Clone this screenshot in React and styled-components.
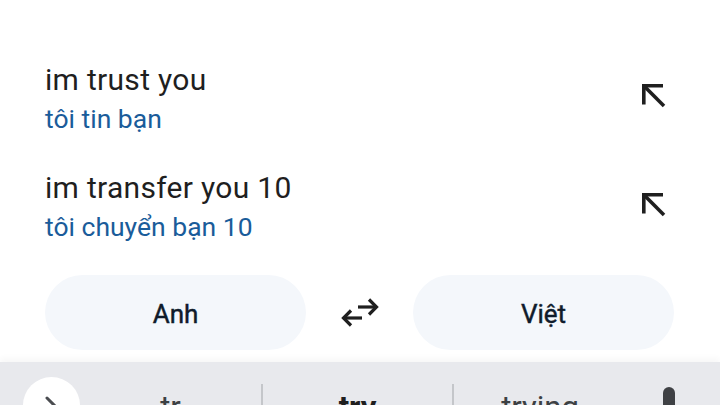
import React from "react";
import styled, { createGlobalStyle } from "styled-components";

const Global = createGlobalStyle`
  html, body { margin: 0; padding: 0; background: #ffffff; }
  body { font-family: Roboto, "Noto Sans", "Liberation Sans", sans-serif; }
`;

const Screen = styled.div`
  width: 720px;
  height: 405px;
  overflow: hidden;
  display: flex;
  flex-direction: column;
  background: #ffffff;
`;

const List = styled.div`
  display: flex;
  flex-direction: column;
  padding-top: 44px;
`;

const Row = styled.div`
  display: flex;
  align-items: flex-start;
  justify-content: space-between;
  padding: 18px 50px 17px 45px;
`;

const Texts = styled.div`
  display: flex;
  flex-direction: column;
  gap: 5px;
`;

const Source = styled.div`
  font-size: 30px;
  line-height: 36px;
  letter-spacing: 0.3px;
  color: #1f1f1f;
`;

const Target = styled.div`
  font-size: 26.5px;
  line-height: 32px;
  color: #1a5c9a;
`;

const IconBtn = styled.div`
  width: 34px;
  height: 34px;
  margin-top: ${(p) => p.$offset}px;
  color: #1f1f1f;
  display: flex;
`;

const LangBar = styled.div`
  margin-top: 15px;
  padding: 0 46px 0 45px;
  display: grid;
  grid-template-columns: 261px 1fr 261px;
  align-items: center;
`;

const Pill = styled.div`
  height: 75px;
  padding-top: 3px;
  box-sizing: border-box;
  border-radius: 38px;
  background: #f4f7fb;
  display: flex;
  align-items: center;
  justify-content: center;
  font-size: 26px;
  font-weight: 400;
  -webkit-text-stroke: 0.45px #0f1b2b;
  color: #0f1b2b;
`;

const Swap = styled.div`
  display: flex;
  justify-content: center;
  color: #1f1f1f;
`;

const Keyboard = styled.div`
  margin-top: 12px;
  height: 110px;
  flex-shrink: 0;
  background: #e8e9ed;
  box-shadow: 0 -4px 6px rgba(0, 0, 0, 0.03);
  display: flex;
  align-items: flex-start;
`;

const Circle = styled.div`
  width: 57px;
  height: 57px;
  border-radius: 50%;
  background: #ffffff;
  margin: 15px 0 0 23px;
  flex-shrink: 0;
  display: flex;
  align-items: center;
  justify-content: center;
  color: #4a4c50;
`;

const Suggestion = styled.div`
  width: ${(p) => p.$w}px;
  text-align: center;
  padding-top: 26px;
  font-size: 31px;
  line-height: 40px;
  font-weight: ${(p) => (p.$bold ? 700 : 400)};
  color: ${(p) => (p.$bold ? "#1f1f1f" : "#3c4043")};
`;

const Divider = styled.div`
  width: 2px;
  height: 40px;
  margin-top: 22px;
  background: #c4c6ca;
  flex-shrink: 0;
`;

const Mic = styled.div`
  margin: 25px 0 0 30px;
  color: #3f4145;
  display: flex;
`;

const NorthWest = () => (
  <svg width="34" height="34" viewBox="0 0 34 34" fill="none" stroke="currentColor" strokeWidth="3.6" strokeLinejoin="miter">
    <path d="M7.8 26.5V7.8H27" />
    <path d="M7.8 7.8L28 28" />
  </svg>
);

const SwapIcon = () => (
  <svg width="40" height="40" viewBox="0 0 40 40" fill="none" stroke="currentColor" strokeWidth="3.2" strokeLinecap="butt" strokeLinejoin="miter">
    <path d="M18 14h18" />
    <path d="M29 6.5l7.5 7.5-7.5 7.5" />
    <path d="M22 25H4" />
    <path d="M11 17.5L3.5 25l7.5 7.5" />
  </svg>
);

const Chevron = () => (
  <svg width="24" height="24" viewBox="0 0 24 24" fill="none" stroke="currentColor" strokeWidth="3" strokeLinecap="round">
    <path d="M7 4l8.5 8.5L7 21" />
  </svg>
);

const MicIcon = () => (
  <svg width="26" height="44" viewBox="0 0 26 44" fill="none">
    <rect x="7" y="0" width="12" height="30" rx="6" fill="currentColor" />
    <path d="M2 22c0 7 5 11.5 11 11.5S24 29 24 22" stroke="currentColor" strokeWidth="2.5" opacity="0.6" />
  </svg>
);

const rows = [
  { src: "im trust you", dst: "tôi tin bạn", off: 16 },
  { src: "im transfer you 10", dst: "tôi chuyển bạn 10", off: 17 },
];

export default function App() {
  return (
    <>
      <Global />
      <Screen>
        <List>
          {rows.map((r) => (
            <Row key={r.src}>
              <Texts>
                <Source>{r.src}</Source>
                <Target>{r.dst}</Target>
              </Texts>
              <IconBtn $offset={r.off}>
                <NorthWest />
              </IconBtn>
            </Row>
          ))}
        </List>
        <LangBar>
          <Pill>Anh</Pill>
          <Swap>
            <SwapIcon />
          </Swap>
          <Pill>Việt</Pill>
        </LangBar>
        <Keyboard>
          <Circle>
            <Chevron />
          </Circle>
          <Suggestion $w={181}>tr</Suggestion>
          <Divider />
          <Suggestion $w={189} $bold>try</Suggestion>
          <Divider />
          <Suggestion $w={172}>trying</Suggestion>
          <Mic>
            <MicIcon />
          </Mic>
        </Keyboard>
      </Screen>
    </>
  );
}
